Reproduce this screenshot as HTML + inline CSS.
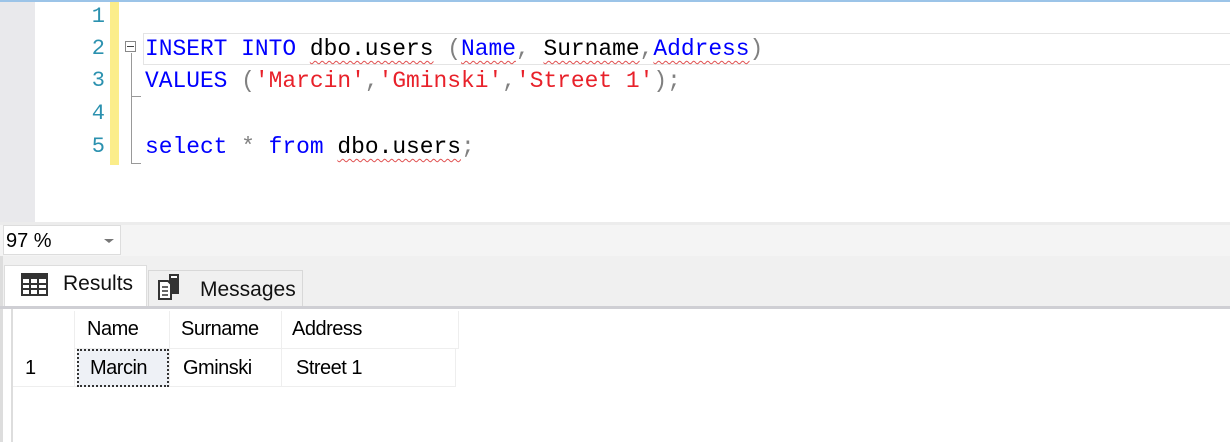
<!DOCTYPE html>
<html><head><style>
body{margin:0;width:1230px;height:442px;overflow:hidden;background:#fff;position:relative;font-family:"Liberation Sans",sans-serif}
.a{position:absolute}
.code{font-family:"Liberation Mono",monospace;font-size:22.9px;white-space:pre;line-height:32px;height:32px}
.ln{font-family:"Liberation Mono",monospace;font-size:22px;color:#2b91af;width:100px;text-align:right;line-height:32px}
.k{color:#0000ff}.s{color:#e8212a}.g{color:#808080}
.w{text-decoration:underline wavy #e05050;text-decoration-thickness:1px;text-underline-offset:5px}
</style></head><body>
<div class="a" style="left:0;top:0;width:1230px;height:2px;background:#9cc4e8"></div>
<div class="a" style="left:0;top:2px;width:35px;height:220px;background:#e9e9ec"></div>
<div class="a" style="left:110px;top:2px;width:9px;height:163px;background:#fbed8a"></div>
<div class="a" style="left:143px;top:33px;width:1087px;height:30px;border:1px solid #e4e4e4;border-right:none"></div>
<div class="a" style="left:125px;top:41px;width:11px;height:11px;border:1px solid #888;box-sizing:border-box"></div>
<div class="a" style="left:127px;top:46px;width:7px;height:1px;background:#444"></div>
<div class="a" style="left:131px;top:53px;width:1px;height:110px;background:#999"></div>
<div class="a" style="left:131px;top:96px;width:10px;height:1px;background:#999"></div>
<div class="a" style="left:131px;top:163px;width:10px;height:1px;background:#999"></div>
<div class="a ln" style="left:5px;top:1px">1</div>
<div class="a ln" style="left:5px;top:33px">2</div>
<div class="a ln" style="left:5px;top:65px">3</div>
<div class="a ln" style="left:5px;top:98px">4</div>
<div class="a ln" style="left:5px;top:131px">5</div>
<div class="a code" style="left:145px;top:33px"><span class="k">INSERT INTO</span> <span class="w">dbo.users</span> <span class="g">(</span><span class="k w">Name</span><span class="g">,</span> <span class="w">Surname</span><span class="g">,</span><span class="k w">Address</span><span class="g">)</span></div>
<div class="a code" style="left:145px;top:65px"><span class="k">VALUES</span> <span class="g">(</span><span class="s">'Marcin'</span><span class="g">,</span><span class="s">'Gminski'</span><span class="g">,</span><span class="s">'Street 1'</span><span class="g">);</span></div>
<div class="a code" style="left:145px;top:131px"><span class="k">select</span> <span class="g">*</span> <span class="k">from</span> <span class="w">dbo.users</span><span class="g">;</span></div>
<div class="a" style="left:0;top:222px;width:1230px;height:34px;background:#f4f4f4"></div>
<div class="a" style="left:0;top:256px;width:1230px;height:50px;background:#f0f0f0"></div>
<div class="a" style="left:0;top:222px;width:1230px;height:3px;background:#ececec"></div>
<div class="a" style="left:3px;top:225px;width:118px;height:30px;background:#fff;border:1px solid #ddd;box-sizing:border-box;font-size:20px;line-height:30px;padding-left:2px">97 %</div>
<div class="a" style="left:104px;top:239px;border-left:5px solid transparent;border-right:5px solid transparent;border-top:4px solid #777"></div>
<div class="a" style="left:0;top:256px;width:3px;height:186px;background:#ddd"></div>
<div class="a" style="left:4px;top:265px;width:143px;height:43px;background:#fff;border:1px solid #ddd;border-bottom:none;box-sizing:border-box"></div>
<div class="a" style="left:148px;top:270px;width:155px;height:36px;background:#f0f0f0;border:1px solid #d8d8d8;border-bottom:none;box-sizing:border-box"></div>
<svg class="a" style="left:21px;top:273px" width="28" height="24" viewBox="0 0 28 24"><rect x="1" y="1" width="25" height="21" fill="#fff" stroke="#333" stroke-width="2"/><rect x="1" y="1" width="25" height="5" fill="#333"/><path d="M9 1V22M17 1V22M1 11H26M1 16H26" stroke="#333" stroke-width="2"/></svg>
<div class="a" style="left:63px;top:272px;font-size:21px;color:#111">Results</div>
<svg class="a" style="left:157px;top:273px" width="30" height="28" viewBox="0 0 30 28"><rect x="12" y="1" width="10" height="20" fill="#333"/><rect x="14" y="3" width="6" height="2" fill="#fff"/><path d="M2 8h9l3 3v15H2z" fill="#fff" stroke="#333" stroke-width="2"/><path d="M5 14h6M5 18h6M5 22h6" stroke="#333" stroke-width="1.5"/></svg>
<div class="a" style="left:200px;top:278px;font-size:21px;color:#111">Messages</div>
<div class="a" style="left:0;top:306px;width:1230px;height:3px;background:#cfcfd4"></div>
<div class="a" style="left:11px;top:309px;width:1219px;height:133px;background:#fff;border-left:2px solid #ddd"></div>
<div class="a" style="left:13px;top:311px;width:61px;height:75px;border-right:1px solid #eee"></div>
<div class="a" style="left:75px;top:311px;width:383px;height:37px;border-right:1px solid #eee;border-bottom:1px solid #eee"></div>
<div class="a" style="left:13px;top:349px;width:442px;height:37px;border-bottom:1px solid #eee;border-right:1px solid #eee"></div>
<div class="a" style="left:169px;top:311px;width:1px;height:75px;background:#eee"></div>
<div class="a" style="left:281px;top:311px;width:1px;height:75px;background:#eee"></div>
<div class="a" style="left:77px;top:349px;width:92px;height:38px;background:#eef1f6;border:2px dotted #333;box-sizing:border-box"></div>
<div class="a" style="left:87px;top:318px;font-size:20px;letter-spacing:-0.5px">Name</div>
<div class="a" style="left:181px;top:318px;font-size:20px;letter-spacing:-0.5px">Surname</div>
<div class="a" style="left:292px;top:318px;font-size:20px;letter-spacing:-0.5px">Address</div>
<div class="a" style="left:25px;top:357px;font-size:20px">1</div>
<div class="a" style="left:90px;top:357px;font-size:20px;letter-spacing:-0.5px">Marcin</div>
<div class="a" style="left:183px;top:357px;font-size:20px;letter-spacing:-0.5px">Gminski</div>
<div class="a" style="left:296px;top:357px;font-size:20px;letter-spacing:-0.5px">Street 1</div>
</body></html>
